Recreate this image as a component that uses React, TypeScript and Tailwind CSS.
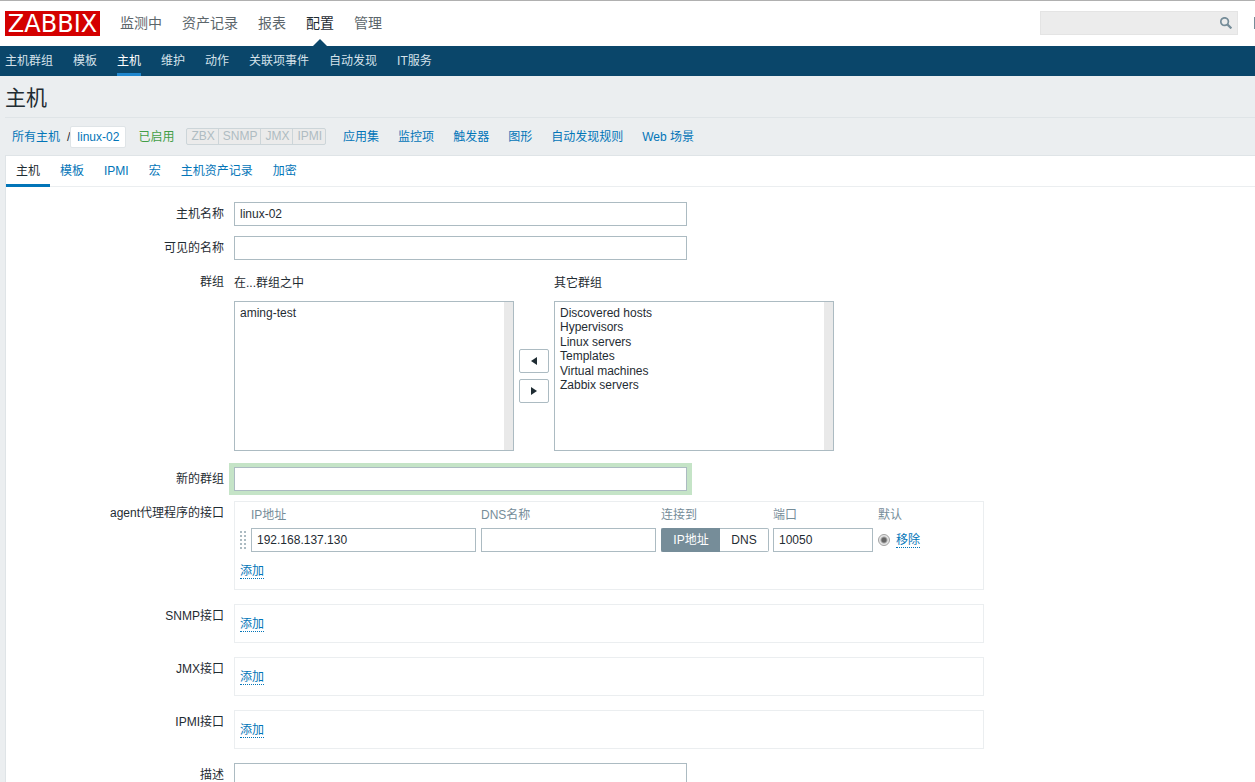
import { useState, type ReactNode } from "react";

const mainNav = ["监测中", "资产记录", "报表", "配置", "管理"];
const subNav = ["主机群组", "模板", "主机", "维护", "动作", "关联项事件", "自动发现", "IT服务"];
const hostLinks = ["应用集", "监控项", "触发器", "图形", "自动发现规则", "Web 场景"];
const interfaceTypes = ["ZBX", "SNMP", "JMX", "IPMI"];
const tabs = ["主机", "模板", "IPMI", "宏", "主机资产记录", "加密"];
const otherGroups = [
  "Discovered hosts",
  "Hypervisors",
  "Linux servers",
  "Templates",
  "Virtual machines",
  "Zabbix servers",
];

const field = "h-6 border border-[#acbbc2] bg-white px-[5px] text-xs text-[#1f2c33] outline-none";

function Header() {
  return (
    <header>
      <div className="flex h-[46px] items-start overflow-hidden border-t border-[#b0b0b0] bg-white pt-[10px] pl-[5px]">
        <a
          href="#"
          className="flex h-[25px] w-[95px] shrink-0 items-center justify-center bg-[#d40000] font-['DejaVu_Sans',sans-serif] text-2xl leading-none text-white"
        >
          ZABBIX
        </a>
        <nav className="ml-5 flex gap-5 text-sm">
          {mainNav.map((item) => {
            const active = item === "配置";
            return (
              <a
                key={item}
                href="#"
                className={
                  active
                    ? "relative flex h-9 shrink-0 justify-center leading-6 text-[#1f2c33]"
                    : "h-9 shrink-0 leading-6 text-[#5c666b]"
                }
              >
                {item}
                {active && (
                  <svg viewBox="0 0 16 8" className="absolute bottom-0 h-2 w-4" aria-hidden="true">
                    <path d="M0 8 L8 0 L16 8 Z" fill="#0a466a" />
                  </svg>
                )}
              </a>
            );
          })}
        </nav>
        <form className="ml-auto flex h-6 w-[198px] shrink-0 items-center border border-[#e4e4e4] bg-[#ececec] pr-[5px]">
          <input type="text" aria-label="搜索" className="min-w-0 flex-1 px-1 text-xs outline-none" />
          <button type="button" aria-label="搜索" className="p-0">
            <svg viewBox="0 0 12 12" className="h-3 w-3" fill="none" stroke="#768d99">
              <circle cx="4.6" cy="4.6" r="3.8" strokeWidth="1.7" />
              <path d="M7.6 7.6 L11.4 11.4" strokeWidth="2.2" />
            </svg>
          </button>
        </form>
        <a href="#" aria-label="Share" className="mt-1.5 ml-4 h-3 w-px shrink-0 overflow-hidden">
          <svg viewBox="0 0 12 12" className="h-3 w-3 max-w-none" aria-hidden="true">
            <path d="M0 0 H3 V12 H0 Z" fill="#768d99" />
          </svg>
        </a>
      </div>
      <nav className="flex h-[30px] gap-5 bg-[#0a466a] pl-[5px] text-xs leading-[30px] text-[#d5e2ea]">
        {subNav.map((item) => (
          <a
            key={item}
            href="#"
            className={item === "主机" ? "h-[30px] border-b-[3px] border-[#1f87cf] text-white" : "h-[30px]"}
          >
            {item}
          </a>
        ))}
      </nav>
    </header>
  );
}

function HostBar() {
  return (
    <div className="flex h-[37px] items-center pl-[7px] text-xs leading-4 text-[#0275b8]">
      <a href="#">所有主机</a>
      <span className="ml-[7px] text-[#1f2c33]">/</span>
      <a href="#" className="rounded-xs border border-[#dfe4e7] bg-white px-1.5 py-0.5">
        linux-02
      </a>
      <span className="ml-3 text-[#429e47]">已启用</span>
      <span className="ml-3 flex rounded-xs border border-[#ccd5d9] bg-[#ebebeb] leading-[15px] text-[#afbcc2]">
        {interfaceTypes.map((type) => (
          <span key={type} className="border-r border-[#ccd5d9] pr-[3px] pl-1 last:border-r-0">
            {type}
          </span>
        ))}
      </span>
      <nav className="ml-[17px] flex gap-[19px]">
        {hostLinks.map((item) => (
          <a key={item} href="#">
            {item}
          </a>
        ))}
      </nav>
    </div>
  );
}

function Row({ label, htmlFor, children }: { label: string; htmlFor?: string; children: ReactNode }) {
  return (
    <div className="flex gap-[10px]">
      <label htmlFor={htmlFor} className="w-[218px] shrink-0 pt-1 text-right leading-4">
        {label}
      </label>
      {children}
    </div>
  );
}

function GroupList({ id, caption, options }: { id: string; caption: string; options: string[] }) {
  return (
    <div className="w-[280px]">
      <label htmlFor={id} className="block pt-[5px] pb-[10px] leading-4">
        {caption}
      </label>
      <div className="h-[150px] border border-[#acbbc2]">
        <select
          id={id}
          multiple
          className="block h-full w-full appearance-none overflow-hidden border-r-[9px] border-[#e9e9e9] bg-white px-[3px] py-1 text-xs outline-none"
        >
          {options.map((option) => (
            <option key={option} className="px-0.5 leading-[14px]">
              {option}
            </option>
          ))}
        </select>
      </div>
    </div>
  );
}

function LinkButton({ children }: { children: ReactNode }) {
  return (
    <button type="button" className="border-b border-dotted border-[#0275b8] leading-[14px] text-[#0275b8]">
      {children}
    </button>
  );
}

function InterfaceRow({ label }: { label: string }) {
  return (
    <Row label={label}>
      <div className="h-[39px] w-[750px] border border-[#ebeef0] px-[5px] pt-3">
        <div className="flex">
          <LinkButton>添加</LinkButton>
        </div>
      </div>
    </Row>
  );
}

function DragHandle() {
  return (
    <svg viewBox="0 0 6 18" className="block h-[18px] w-1.5" fill="#acbbc2" aria-hidden="true">
      {[0, 4, 8, 12, 16].map((y) => (
        <path key={y} d={`M0 ${y}h2v2h-2z M4 ${y}h2v2h-2z`} />
      ))}
    </svg>
  );
}

function AgentInterfaces() {
  const [connect, setConnect] = useState("ip");
  const segment = "flex h-6 cursor-pointer items-center justify-center border-y";
  const on = " border-[#768d99] bg-[#768d99] text-white";
  const off = " border-[#acbbc2] bg-white";
  return (
    <div className="h-[89px] w-[750px] border border-[#ebeef0] px-[5px] pt-[5px]">
      <table className="table-fixed border-collapse">
        <thead>
          <tr className="text-left leading-4 text-[#768d99]">
            <th className="w-[11px]" />
            <th className="w-[230px] font-normal">IP地址</th>
            <th className="w-[180px] font-normal">DNS名称</th>
            <th className="w-28 font-normal">连接到</th>
            <th className="w-[105px] font-normal">端口</th>
            <th className="w-[18px] font-normal whitespace-nowrap" colSpan={2}>
              默认
            </th>
          </tr>
        </thead>
        <tbody>
          <tr className="h-[34px]">
            <td>
              <DragHandle />
            </td>
            <td>
              <input
                type="text"
                aria-label="IP地址"
                defaultValue="192.168.137.130"
                className={field + " block w-[225px]"}
              />
            </td>
            <td>
              <input type="text" aria-label="DNS名称" className={field + " block w-[175px]"} />
            </td>
            <td>
              <div className="relative flex">
                <label className={segment + " w-[59px] rounded-l-xs border-l" + (connect === "ip" ? on : off)}>
                  <input
                    type="radio"
                    name="connect"
                    className="sr-only"
                    checked={connect === "ip"}
                    onChange={() => setConnect("ip")}
                  />
                  IP地址
                </label>
                <label className={segment + " w-[49px] rounded-r-xs border-r" + (connect === "dns" ? on : off)}>
                  <input
                    type="radio"
                    name="connect"
                    className="sr-only"
                    checked={connect === "dns"}
                    onChange={() => setConnect("dns")}
                  />
                  DNS
                </label>
              </div>
            </td>
            <td>
              <input type="text" aria-label="端口" defaultValue="10050" className={field + " block w-[100px]"} />
            </td>
            <td className="w-[18px]">
              <input
                type="radio"
                name="default"
                aria-label="默认"
                defaultChecked
                className="block h-3 w-3 appearance-none rounded-full border border-[#a3a3a3] bg-[radial-gradient(circle,#666_2px,#e6e6e6_4px)]"
              />
            </td>
            <td>
              <div className="flex whitespace-nowrap">
                <LinkButton>移除</LinkButton>
              </div>
            </td>
          </tr>
        </tbody>
      </table>
      <div className="flex pt-[7px]">
        <LinkButton>添加</LinkButton>
      </div>
    </div>
  );
}

function MoveButton({ label, path }: { label: string; path: string }) {
  return (
    <button
      type="button"
      aria-label={label}
      className="flex h-6 w-[30px] items-center justify-center rounded-xs border border-[#acbbc2] bg-white"
    >
      <svg viewBox="0 0 6 8" className="h-2 w-1.5" aria-hidden="true">
        <path d={path} fill="#1f2c33" />
      </svg>
    </button>
  );
}

export default function App() {
  return (
    <div className="h-screen overflow-hidden bg-[#ebeef0] font-['Liberation_Sans','Noto_Sans_CJK_SC',sans-serif] text-xs text-[#1f2c33]">
      <Header />
      <main className="pl-[5px]">
        <h1 className="h-[42px] border-b border-[#dfe4e7] pt-2 text-[21px] leading-7">主机</h1>
        <HostBar />
        <section className="border-t border-l border-[#dfe4e7] bg-white">
          <div className="flex h-[31px] border-b border-[#ebeef0] leading-[30px]">
            {tabs.map((tab) => (
              <a
                key={tab}
                href="#"
                className={
                  tab === "主机"
                    ? "h-[31px] border-b-[3px] border-[#0275b8] px-[10px]"
                    : "px-[10px] text-[#0275b8]"
                }
              >
                {tab}
              </a>
            ))}
          </div>
          <form className="flex flex-col gap-[14px] pt-[15px]">
            <div className="flex flex-col gap-[10px]">
              <Row label="主机名称" htmlFor="host">
                <input id="host" type="text" defaultValue="linux-02" className={field + " w-[453px]"} />
              </Row>
              <Row label="可见的名称" htmlFor="visible-name">
                <input id="visible-name" type="text" className={field + " w-[453px]"} />
              </Row>
              <Row label="群组" htmlFor="in-groups">
                <div className="flex gap-[5px] pb-1.5">
                  <GroupList id="in-groups" caption="在...群组之中" options={["aming-test"]} />
                  <div className="flex flex-col justify-center gap-1.5 pt-[31px]">
                    <MoveButton label="加入" path="M6 0 V8 L0 4 Z" />
                    <MoveButton label="移出" path="M0 0 V8 L6 4 Z" />
                  </div>
                  <GroupList id="other-groups" caption="其它群组" options={otherGroups} />
                </div>
              </Row>
              <Row label="新的群组" htmlFor="new-group">
                <input
                  id="new-group"
                  type="text"
                  className={
                    field + " w-[453px] shadow-[1px_0_0_4px_#c5e4c7,-1px_0_0_4px_#c5e4c7]"
                  }
                />
              </Row>
              <Row label="agent代理程序的接口">
                <AgentInterfaces />
              </Row>
            </div>
            <InterfaceRow label="SNMP接口" />
            <InterfaceRow label="JMX接口" />
            <InterfaceRow label="IPMI接口" />
            <Row label="描述" htmlFor="description">
              <textarea id="description" rows={7} className="w-[453px] border border-[#acbbc2] bg-white px-[5px] py-1" />
            </Row>
          </form>
        </section>
      </main>
    </div>
  );
}
